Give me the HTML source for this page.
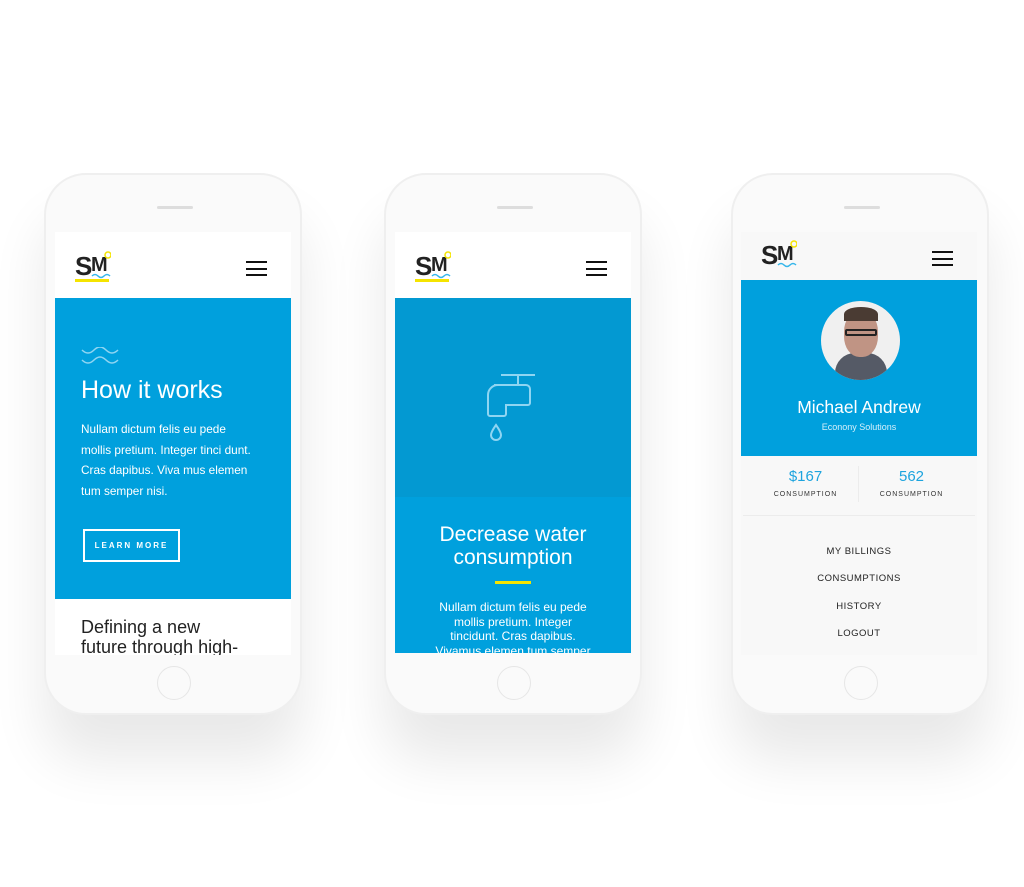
<!DOCTYPE html>
<html><head><meta charset="utf-8"><style>
*{margin:0;padding:0;box-sizing:border-box}
body{width:1024px;height:887px;background:#fff;position:relative;overflow:hidden;font-family:"Liberation Sans",sans-serif}
.ph{position:absolute;top:173px;width:258px;height:542px;border-radius:42px;background:#fafafa;border:2px solid #efefef;box-shadow:0 45px 55px rgba(0,0,0,.09)}
.sp{position:absolute;top:31px;left:111px;width:36px;height:3px;background:#ddd;border-radius:2px}
.hb{position:absolute;top:491px;left:111px;width:34px;height:34px;border-radius:50%;border:1.5px solid #e6e6e6;background:#fafafa}
.sc{position:absolute;top:57px;left:9px;width:236px;height:423px;overflow:hidden;background:#fff}
.hdr{height:66px;position:relative;background:#fff}
.logo{position:absolute;left:20px;top:19px;width:36px;height:30px}
.ham{position:absolute;right:24px;top:29px;width:21px;height:15px;border-top:2px solid #111;border-bottom:2px solid #111}
.ham:after{content:"";position:absolute;left:0;right:0;top:4.5px;height:2px;background:#111}
.blue{background:#00a0dd;color:#fff}
</style></head><body>
<svg width="0" height="0" style="position:absolute"><defs>
<g id="lg"><text x="0" y="24" font-family="Liberation Sans" font-weight="bold" font-size="26" fill="#222">S</text><text x="16" y="20" font-family="Liberation Sans" font-weight="bold" font-size="20" fill="#222">M</text><circle cx="33" cy="4" r="3" fill="none" stroke="#f5e400" stroke-width="1.5"/><path d="M17 25q3-3 6 0t6 0t6 0" fill="none" stroke="#35b6ea" stroke-width="1.5"/></g>
</defs></svg>

<div class="ph" style="left:44px"><div class="sp"></div><div class="hb"></div>
<div class="sc">
<div class="hdr"><svg class="logo" viewBox="0 0 36 30"><use href="#lg"/></svg><div style="position:absolute;left:20px;top:47px;width:34px;height:3px;background:#f5e400"></div><div class="ham"></div></div>
<div class="blue" style="height:301px;position:relative;padding:0 26px">
<svg style="position:absolute;left:26px;top:49px" width="38" height="20" viewBox="0 0 38 20"><path d="M1 3q6 6 12 0t12 0t12 0M1 13q6 6 12 0t12 0t12 0" fill="none" stroke="#8fd5f2" stroke-width="1.5"/></svg>
<div style="position:absolute;left:26px;top:78px;font-size:25px;font-weight:300">How it works</div>
<div style="position:absolute;left:26px;top:121px;font-size:11.8px;line-height:20.5px;white-space:nowrap">Nullam dictum felis eu pede<br>mollis pretium. Integer tinci dunt.<br>Cras dapibus. Viva mus elemen<br>tum semper nisi.</div>
<div style="position:absolute;left:28px;top:231px;width:97px;height:33px;border:2px solid #fff;font-size:8px;letter-spacing:2px;font-weight:bold;text-align:center;line-height:29px">LEARN MORE</div>
</div>
<div style="padding:18px 26px 0;font-size:18px;line-height:20px;color:#222;font-weight:300;white-space:nowrap">Defining a new<br>future through high-</div>
</div></div>

<div class="ph" style="left:384px"><div class="sp"></div><div class="hb"></div>
<div class="sc" style="left:9px;height:421px">
<div class="hdr"><svg class="logo" viewBox="0 0 36 30"><use href="#lg"/></svg><div style="position:absolute;left:20px;top:47px;width:34px;height:3px;background:#f5e400"></div><div class="ham"></div></div>
<div style="height:199px;background:#0399d2;position:relative">
<svg style="position:absolute;left:91px;top:75px" width="52" height="72" viewBox="0 0 52 72"><path d="M15 2h34M32 2v10M8 12h32a4 4 0 0 1 4 4v14a2 2 0 0 1-2 2H20v9a2 2 0 0 1-2 2H4a2 2 0 0 1-2-2V22a10 10 0 0 1 10-10" fill="none" stroke="#8fd5f2" stroke-width="2"/><path d="M10 52q-5 7-5 10a5 5 0 0 0 10 0q0-3-5-10z" fill="none" stroke="#8fd5f2" stroke-width="2"/></svg>
</div>
<div class="blue" style="height:160px;text-align:center;padding-top:26px">
<div style="font-size:21px;line-height:23px;font-weight:300">Decrease water<br>consumption</div>
<div style="width:36px;height:3px;background:#f5e400;margin:12px auto 16px"></div>
<div style="font-size:12px;line-height:14.5px;padding:0 36px">Nullam dictum felis eu pede mollis pretium. Integer tincidunt. Cras dapibus. Vivamus elemen tum semper</div>
</div>
</div></div>

<div class="ph" style="left:731px"><div class="sp"></div><div class="hb"></div>
<div class="sc" style="left:8px;background:#f8f8f8">
<div style="height:48px;position:relative"><svg style="position:absolute;left:20px;top:8px;width:36px;height:30px" viewBox="0 0 36 30"><use href="#lg"/></svg><div class="ham" style="top:19px"></div></div>
<div class="blue" style="height:176px;text-align:center;position:relative">
<div style="position:absolute;left:80px;top:21px;width:79px;height:79px;border-radius:50%;background:#f0f0f0;overflow:hidden">
<div style="position:absolute;left:14px;top:52px;width:52px;height:40px;border-radius:20px 20px 0 0;background:#555a66"></div>
<div style="position:absolute;left:23px;top:10px;width:34px;height:46px;border-radius:45%;background:#c09484"></div>
<div style="position:absolute;left:23px;top:6px;width:34px;height:14px;border-radius:50% 50% 0 0;background:#4a3b33"></div>
<div style="position:absolute;left:24px;top:28px;width:32px;height:7px;border:2px solid #222;border-radius:2px"></div>
</div>
<div style="position:absolute;top:117px;width:100%;font-size:17.5px;font-weight:300">Michael Andrew</div>
<div style="position:absolute;top:142px;width:100%;font-size:9px;color:#d6f0fb">Econony Solutions</div>
</div>
<div style="height:60px;position:relative;border-bottom:1px solid #ececec;margin:0 2px">
<div style="position:absolute;left:0;width:125px;top:12px;text-align:center;color:#1da4de;font-size:15px">$167<div style="font-size:7px;color:#333;letter-spacing:1px;margin-top:6px">CONSUMPTION</div></div>
<div style="position:absolute;left:115px;top:10px;width:1px;height:36px;background:#ececec"></div>
<div style="position:absolute;left:116px;width:105px;top:12px;text-align:center;color:#1da4de;font-size:15px">562<div style="font-size:7px;color:#333;letter-spacing:1px;margin-top:6px">CONSUMPTION</div></div>
</div>
<div style="text-align:center;font-size:9.5px;color:#222;letter-spacing:.5px;line-height:27.3px;padding-top:22px">MY BILLINGS<br>CONSUMPTIONS<br>HISTORY<br>LOGOUT</div>
</div></div>
</body></html>
